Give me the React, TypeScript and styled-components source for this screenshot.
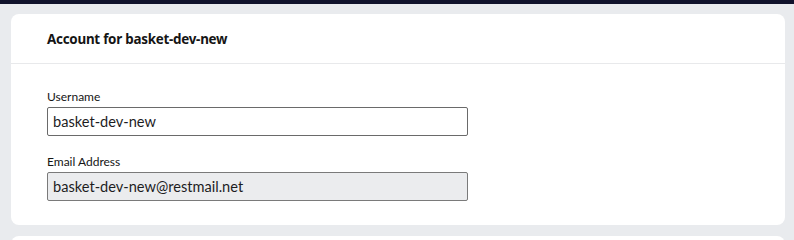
import React from "react";
import styled, { createGlobalStyle } from "styled-components";

const Global = createGlobalStyle`
  html, body { margin: 0; padding: 0; background: #e9ebee; }
  body { font-family: Lato, "Noto Sans", sans-serif; color: #1d1d1f; }
  * { box-sizing: border-box; }
`;

const TopBar = styled.div`
  height: 4px;
  background: #10122b;
`;

const Page = styled.main`
  padding: 10px 9px 0 11px;
  display: flex;
  flex-direction: column;
  gap: 11px;
`;

const Card = styled.section`
  background: #ffffff;
  border-radius: 8px;
  overflow: hidden;
`;

const CardHeader = styled.header`
  height: 50px;
  padding: 0 36px;
  display: flex;
  align-items: center;
  border-bottom: 1px solid #e8e9eb;
`;

const Title = styled.h2`
  margin: 0;
  font-family: "Noto Sans", Lato, sans-serif;
  font-size: 13.4px;
  font-weight: 700;
  letter-spacing: -0.25px;
  color: #151515;
`;

const CardBody = styled.div`
  padding: 25px 36px 24px;
  display: flex;
  flex-direction: column;
  gap: 18px;
`;

const Field = styled.label`
  display: flex;
  flex-direction: column;
  gap: 2px;
`;

const Label = styled.span`
  font-size: 12px;
  line-height: 16px;
  color: #151515;
`;

const Input = styled.input<{ $readOnly?: boolean }>`
  width: 421px;
  height: 29px;
  padding: 0 5px;
  border: 1px solid ${p => (p.$readOnly ? "#7a7a7a" : "#6a6a6a")};
  border-radius: 2px;
  background: ${p => (p.$readOnly ? "#ebecee" : "#ffffff")};
  font-family: inherit;
  font-size: 14.6px;
  color: #1d1d1f;
  outline: none;
`;

const NextCard = styled.div`
  height: 20px;
  background: #ffffff;
  border-radius: 8px 8px 0 0;
`;

export default function App() {
  return (
    <>
      <Global />
      <TopBar />
      <Page>
        <Card>
          <CardHeader>
            <Title>Account for basket-dev-new</Title>
          </CardHeader>
          <CardBody>
            <Field>
              <Label>Username</Label>
              <Input defaultValue="basket-dev-new" />
            </Field>
            <Field>
              <Label>Email Address</Label>
              <Input $readOnly readOnly defaultValue="basket-dev-new@restmail.net" />
            </Field>
          </CardBody>
        </Card>
        <NextCard />
      </Page>
    </>
  );
}
